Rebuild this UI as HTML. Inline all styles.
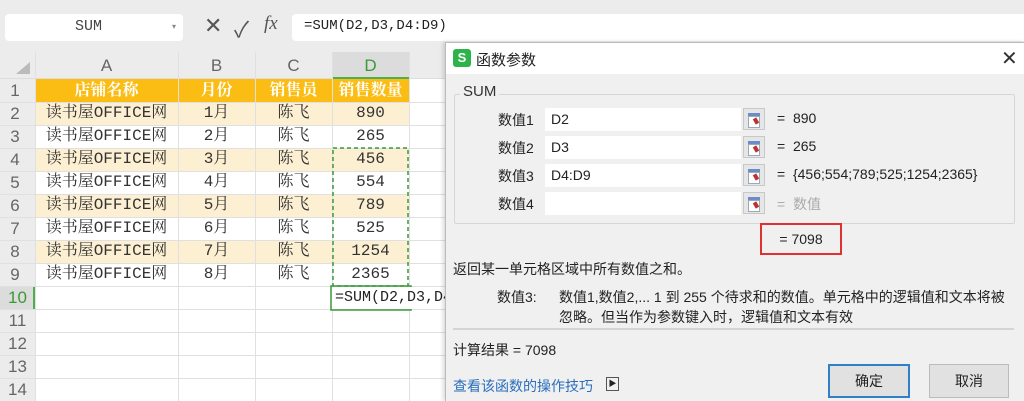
<!DOCTYPE html><html><head><meta charset="utf-8"><style>
*{margin:0;padding:0;box-sizing:border-box}
body{width:1024px;height:401px;overflow:hidden;background:#fff;position:relative;font-family:"Liberation Sans","Noto Sans CJK SC",sans-serif}
.a{position:absolute}
.serif{font-family:"Liberation Mono","Noto Serif CJK SC",monospace}
.hd{font-family:"Liberation Serif","Noto Serif CJK SC",serif}
.c{position:absolute;text-align:center;font-size:16px;line-height:23px;color:#333}
.dlg{font-family:"Liberation Sans","Noto Sans CJK SC",sans-serif;font-size:14px;color:#222}
.inp{position:absolute;left:545px;width:196px;height:23px;background:#fff;font-size:14px;line-height:23px;padding-left:6px}
.ib{position:absolute;left:743px;width:22px;height:22px;background:#e6e6e6;border:1px solid #c8c8c8}
.ib:before{content:"";position:absolute;left:4px;top:4px;width:12px;height:12px;background:#fff;border-top:3px solid #6a8cc8;box-shadow:inset 0 0 0 1px #9ab}
.ib:after{content:"";position:absolute;left:10px;top:9px;width:4px;height:6px;background:#b33;transform:rotate(-30deg)}
</style></head><body>
<div class="a" style="left:0;top:0;width:1024px;height:52px;background:#ececec"></div>
<div class="a" style="left:5px;top:14px;width:178px;height:27px;background:#fff;border-radius:4px"></div>
<div class="a serif" style="left:75px;top:18px;font-size:15px;color:#444">SUM</div>
<div class="a" style="left:172px;top:22px;font-size:8px;color:#888">▾</div>
<div class="a" style="left:204px;top:13px;font-size:22px;color:#555">✕</div>
<div class="a" style="left:234px;top:12px;font-size:22px;color:#555">✓</div>
<div class="a hd" style="left:264px;top:13px;font-size:19px;font-style:italic;color:#555">fx</div>
<div class="a" style="left:292px;top:14px;width:732px;height:27px;background:#fff;border-radius:4px 0 0 4px"></div>
<div class="a serif" style="left:304px;top:18px;font-size:14px;color:#222">=SUM(D2,D3,D4:D9)</div>
<div class="a" style="left:0;top:52px;width:445px;height:27px;background:#ececec;border-bottom:1px solid #ddd"></div>
<div class="a" style="left:332px;top:52px;width:77px;height:27px;background:#dcdcdc;border-bottom:2px solid #4caf50"></div>
<div class="a" style="left:16px;top:62px;width:0;height:0;border-left:14px solid transparent;border-bottom:12px solid #bbb"></div>
<div class="c" style="left:35px;top:54px;width:143px;color:#666;font-size:17px">A</div>
<div class="c" style="left:178px;top:54px;width:77px;color:#666;font-size:17px">B</div>
<div class="c" style="left:255px;top:54px;width:77px;color:#666;font-size:17px">C</div>
<div class="c" style="left:332px;top:54px;width:77px;color:#3a9a3a;font-size:17px">D</div>
<div class="a" style="left:0;top:79px;width:35px;height:322px;background:#ececec"></div>
<div class="a" style="left:0;top:286px;width:35px;height:23px;background:#dcdcdc;border-right:2px solid #4caf50"></div>
<div class="a" style="left:35px;top:79px;width:374px;height:23px;background:#fbbd14"></div>
<div class="a" style="left:35px;top:102px;width:374px;height:23px;background:#fdf0d2"></div>
<div class="a" style="left:35px;top:148px;width:374px;height:23px;background:#fdf0d2"></div>
<div class="a" style="left:35px;top:194px;width:374px;height:23px;background:#fdf0d2"></div>
<div class="a" style="left:35px;top:240px;width:374px;height:23px;background:#fdf0d2"></div>
<svg class="a" style="left:0;top:0" width="445" height="401">
<g stroke="#e0e0e0" stroke-width="1">
<line x1="178.5" y1="52" x2="178.5" y2="401"/><line x1="255.5" y1="52" x2="255.5" y2="401"/><line x1="332.5" y1="52" x2="332.5" y2="401"/><line x1="409.5" y1="52" x2="409.5" y2="401"/>
<line x1="35.5" y1="52" x2="35.5" y2="401"/>
<line x1="0" y1="102.5" x2="445" y2="102.5"/><line x1="0" y1="125.5" x2="445" y2="125.5"/><line x1="0" y1="148.5" x2="445" y2="148.5"/><line x1="0" y1="171.5" x2="445" y2="171.5"/><line x1="0" y1="194.5" x2="445" y2="194.5"/><line x1="0" y1="217.5" x2="445" y2="217.5"/><line x1="0" y1="240.5" x2="445" y2="240.5"/><line x1="0" y1="263.5" x2="445" y2="263.5"/><line x1="0" y1="286.5" x2="445" y2="286.5"/><line x1="0" y1="309.5" x2="445" y2="309.5"/><line x1="0" y1="332.5" x2="445" y2="332.5"/><line x1="0" y1="355.5" x2="445" y2="355.5"/><line x1="0" y1="378.5" x2="445" y2="378.5"/>
</g>
<rect x="333" y="148" width="75" height="138" fill="none" stroke="#3a9a3a" stroke-width="1.5" stroke-dasharray="4,3"/>
<rect x="331" y="286" width="80" height="24" fill="none" stroke="#3a9a3a" stroke-width="1.5"/>
</svg>
<div class="a" style="left:332px;top:287px;width:113px;height:22px;background:#fff"></div>
<div class="a serif" style="left:335px;top:287px;font-size:15px;line-height:22px;color:#222;white-space:nowrap">=SUM(D2,D3,D4</div>
<div class="c" style="left:0;top:79px;width:30px;color:#666;font-size:17px">1</div>
<div class="c" style="left:0;top:102px;width:30px;color:#666;font-size:17px">2</div>
<div class="c" style="left:0;top:125px;width:30px;color:#666;font-size:17px">3</div>
<div class="c" style="left:0;top:148px;width:30px;color:#666;font-size:17px">4</div>
<div class="c" style="left:0;top:171px;width:30px;color:#666;font-size:17px">5</div>
<div class="c" style="left:0;top:194px;width:30px;color:#666;font-size:17px">6</div>
<div class="c" style="left:0;top:217px;width:30px;color:#666;font-size:17px">7</div>
<div class="c" style="left:0;top:240px;width:30px;color:#666;font-size:17px">8</div>
<div class="c" style="left:0;top:263px;width:30px;color:#666;font-size:17px">9</div>
<div class="c" style="left:0;top:286px;width:35px;color:#3a9a3a;font-size:17px">10</div>
<div class="c" style="left:0;top:309px;width:35px;color:#666;font-size:17px">11</div>
<div class="c" style="left:0;top:332px;width:35px;color:#666;font-size:17px">12</div>
<div class="c" style="left:0;top:355px;width:35px;color:#666;font-size:17px">13</div>
<div class="c" style="left:0;top:378px;width:35px;color:#666;font-size:17px">14</div>
<div class="c hd" style="left:35px;top:79px;width:143px;color:#fff;font-weight:bold">店铺名称</div>
<div class="c hd" style="left:178px;top:79px;width:77px;color:#fff;font-weight:bold">月份</div>
<div class="c hd" style="left:255px;top:79px;width:77px;color:#fff;font-weight:bold">销售员</div>
<div class="c hd" style="left:332px;top:79px;width:77px;color:#fff;font-weight:bold">销售数量</div>
<div class="serif">
<div class="c" style="left:35px;top:102px;width:143px">读书屋OFFICE网</div><div class="c" style="left:178px;top:102px;width:77px">1月</div><div class="c" style="left:255px;top:102px;width:77px">陈飞</div><div class="c" style="left:332px;top:102px;width:77px">890</div>
<div class="c" style="left:35px;top:125px;width:143px">读书屋OFFICE网</div><div class="c" style="left:178px;top:125px;width:77px">2月</div><div class="c" style="left:255px;top:125px;width:77px">陈飞</div><div class="c" style="left:332px;top:125px;width:77px">265</div>
<div class="c" style="left:35px;top:148px;width:143px">读书屋OFFICE网</div><div class="c" style="left:178px;top:148px;width:77px">3月</div><div class="c" style="left:255px;top:148px;width:77px">陈飞</div><div class="c" style="left:332px;top:148px;width:77px">456</div>
<div class="c" style="left:35px;top:171px;width:143px">读书屋OFFICE网</div><div class="c" style="left:178px;top:171px;width:77px">4月</div><div class="c" style="left:255px;top:171px;width:77px">陈飞</div><div class="c" style="left:332px;top:171px;width:77px">554</div>
<div class="c" style="left:35px;top:194px;width:143px">读书屋OFFICE网</div><div class="c" style="left:178px;top:194px;width:77px">5月</div><div class="c" style="left:255px;top:194px;width:77px">陈飞</div><div class="c" style="left:332px;top:194px;width:77px">789</div>
<div class="c" style="left:35px;top:217px;width:143px">读书屋OFFICE网</div><div class="c" style="left:178px;top:217px;width:77px">6月</div><div class="c" style="left:255px;top:217px;width:77px">陈飞</div><div class="c" style="left:332px;top:217px;width:77px">525</div>
<div class="c" style="left:35px;top:240px;width:143px">读书屋OFFICE网</div><div class="c" style="left:178px;top:240px;width:77px">7月</div><div class="c" style="left:255px;top:240px;width:77px">陈飞</div><div class="c" style="left:332px;top:240px;width:77px">1254</div>
<div class="c" style="left:35px;top:263px;width:143px">读书屋OFFICE网</div><div class="c" style="left:178px;top:263px;width:77px">8月</div><div class="c" style="left:255px;top:263px;width:77px">陈飞</div><div class="c" style="left:332px;top:263px;width:77px">2365</div>
</div>
<div class="a dlg" style="left:445px;top:42px;width:579px;height:359px;background:#f0f0f0;border-left:1px solid #bbb;border-top:1px solid #bbb;box-shadow:-2px 0 4px rgba(0,0,0,.15)">
 <div class="a" style="left:0;top:0;width:579px;height:31px;background:#fff"></div>
 <div class="a" style="left:7px;top:6px;width:18px;height:18px;background:#2db34a;border-radius:3px;color:#fff;font-size:13px;line-height:18px;text-align:center;font-weight:bold">S</div>
 <div class="a" style="left:30px;top:6px;font-size:15px">函数参数</div>
 <div class="a" style="left:555px;top:3px;font-size:20px;color:#333">✕</div>
 <div class="a" style="left:8px;top:51px;width:561px;height:130px;border:1px solid #d6d6d6;border-radius:2px"></div>
 <div class="a" style="left:14px;top:40px;padding:0 3px;background:#f0f0f0;font-size:15px;color:#333">SUM</div>
 <div class="a" style="left:52px;top:67px">数值1</div><div class="a" style="left:52px;top:95px">数值2</div><div class="a" style="left:52px;top:123px">数值3</div><div class="a" style="left:52px;top:151px">数值4</div>
</div>
<div class="dlg">
<div class="inp" style="top:108px">D2</div><div class="ib" style="top:108px"></div>
<div class="inp" style="top:136px">D3</div><div class="ib" style="top:136px"></div>
<div class="inp" style="top:164px">D4:D9</div><div class="ib" style="top:164px"></div>
<div class="inp" style="top:192px"></div><div class="ib" style="top:192px"></div>
<div class="a" style="left:777px;top:110px">= &nbsp;890</div>
<div class="a" style="left:777px;top:138px">= &nbsp;265</div>
<div class="a" style="left:777px;top:166px">= &nbsp;{456;554;789;525;1254;2365}</div>
<div class="a" style="left:777px;top:194px;color:#aaa">= &nbsp;数值</div>
<div class="a" style="left:760px;top:223px;width:82px;height:32px;border:2px solid #e03030;text-align:center;line-height:28px">= 7098</div>
<div class="a" style="left:453px;top:259px">返回某一单元格区域中所有数值之和。</div>
<div class="a" style="left:497px;top:287px">数值3:</div>
<div class="a" style="left:559px;top:287px;width:455px;line-height:20px">数值1,数值2,... 1 到 255 个待求和的数值。单元格中的逻辑值和文本将被忽略。但当作为参数键入时，逻辑值和文本有效</div>
<div class="a" style="left:453px;top:328px;width:561px;height:2px;background:#d4d4d4"></div>
<div class="a" style="left:453px;top:340px">计算结果 = 7098</div>
<div class="a" style="left:453px;top:376px;color:#2a6ebb">查看该函数的操作技巧</div>
<div class="a" style="left:606px;top:377px;width:13px;height:14px;border:1px solid #555;font-size:8px;line-height:12px;text-align:center">▶</div>
<div class="a" style="left:828px;top:364px;width:82px;height:34px;background:#e1e1e1;border:2px solid #2f80c8;text-align:center;line-height:30px">确定</div>
<div class="a" style="left:929px;top:364px;width:80px;height:34px;background:#e1e1e1;border:1px solid #bcbcbc;text-align:center;line-height:32px">取消</div>
</div>
</body></html>
